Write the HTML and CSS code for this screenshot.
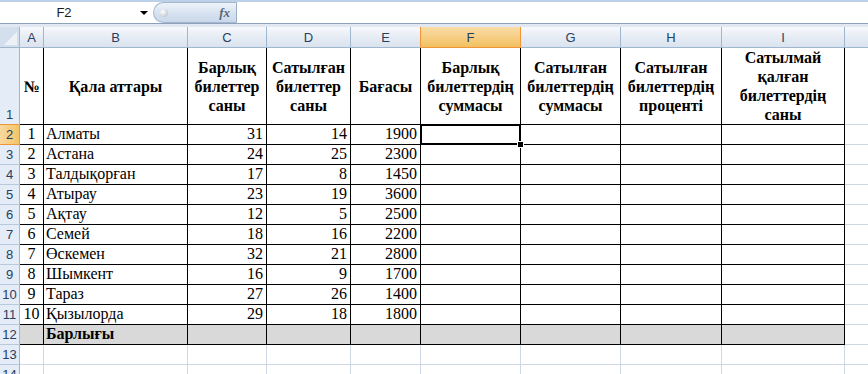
FILE: index.html
```html
<!DOCTYPE html>
<html lang="kk">
<head>
<meta charset="utf-8">
<title>Excel</title>
<link rel="stylesheet" href="styles.css">
</head>
<body>
<div class="fbar">
  <div class="namebox"><span class="name">F2</span><span class="arrow"></span></div>
  <div class="pill"><span class="knob"></span><span class="fx">fx</span></div>
  <div class="formula"></div>
</div>
<div class="gap"></div>
<div class="sheet">
  <div class="corner"><span class="tri"></span></div>
  <div class="ch">A</div><div class="ch">B</div><div class="ch">C</div><div class="ch">D</div><div class="ch prev">E</div><div class="ch sel">F</div><div class="ch">G</div><div class="ch">H</div><div class="ch">I</div><div class="ch"></div>

  <div class="rh prev">1</div>
  <div class="c hd">№</div>
  <div class="c hd">Қала аттары</div>
  <div class="c hd">Барлық<br>билеттер<br>саны</div>
  <div class="c hd">Сатылған<br>билеттер<br>саны</div>
  <div class="c hd">Бағасы</div>
  <div class="c hd">Барлық<br>билеттердің<br>суммасы</div>
  <div class="c hd">Сатылған<br>билеттердің<br>суммасы</div>
  <div class="c hd">Сатылған<br>билеттердің<br>проценті</div>
  <div class="c hd">Сатылмай<br>қалған<br>билеттердің<br>саны</div>
  <div class="g"></div>

  <div class="rh sel">2</div><div class="c ctr">1</div><div class="c">Алматы</div><div class="c num">31</div><div class="c num">14</div><div class="c num">1900</div><div class="c active"><span class="selbox"></span><span class="handle"></span></div><div class="c"></div><div class="c"></div><div class="c"></div><div class="g"></div>
  <div class="rh">3</div><div class="c ctr">2</div><div class="c">Астана</div><div class="c num">24</div><div class="c num">25</div><div class="c num">2300</div><div class="c"></div><div class="c"></div><div class="c"></div><div class="c"></div><div class="g"></div>
  <div class="rh">4</div><div class="c ctr">3</div><div class="c">Талдықорған</div><div class="c num">17</div><div class="c num">8</div><div class="c num">1450</div><div class="c"></div><div class="c"></div><div class="c"></div><div class="c"></div><div class="g"></div>
  <div class="rh">5</div><div class="c ctr">4</div><div class="c">Атырау</div><div class="c num">23</div><div class="c num">19</div><div class="c num">3600</div><div class="c"></div><div class="c"></div><div class="c"></div><div class="c"></div><div class="g"></div>
  <div class="rh">6</div><div class="c ctr">5</div><div class="c">Ақтау</div><div class="c num">12</div><div class="c num">5</div><div class="c num">2500</div><div class="c"></div><div class="c"></div><div class="c"></div><div class="c"></div><div class="g"></div>
  <div class="rh">7</div><div class="c ctr">6</div><div class="c">Семей</div><div class="c num">18</div><div class="c num">16</div><div class="c num">2200</div><div class="c"></div><div class="c"></div><div class="c"></div><div class="c"></div><div class="g"></div>
  <div class="rh">8</div><div class="c ctr">7</div><div class="c">Өскемен</div><div class="c num">32</div><div class="c num">21</div><div class="c num">2800</div><div class="c"></div><div class="c"></div><div class="c"></div><div class="c"></div><div class="g"></div>
  <div class="rh">9</div><div class="c ctr">8</div><div class="c">Шымкент</div><div class="c num">16</div><div class="c num">9</div><div class="c num">1700</div><div class="c"></div><div class="c"></div><div class="c"></div><div class="c"></div><div class="g"></div>
  <div class="rh">10</div><div class="c ctr">9</div><div class="c">Тараз</div><div class="c num">27</div><div class="c num">26</div><div class="c num">1400</div><div class="c"></div><div class="c"></div><div class="c"></div><div class="c"></div><div class="g"></div>
  <div class="rh">11</div><div class="c ctr">10</div><div class="c">Қызылорда</div><div class="c num">29</div><div class="c num">18</div><div class="c num">1800</div><div class="c"></div><div class="c"></div><div class="c"></div><div class="c"></div><div class="g"></div>
  <div class="rh">12</div><div class="c tot"></div><div class="c tot b">Барлығы</div><div class="c tot"></div><div class="c tot"></div><div class="c tot"></div><div class="c tot"></div><div class="c tot"></div><div class="c tot"></div><div class="c tot"></div><div class="g"></div>
  <div class="rh">13</div><div class="g"></div><div class="g"></div><div class="g"></div><div class="g"></div><div class="g"></div><div class="g"></div><div class="g"></div><div class="g"></div><div class="g"></div><div class="g"></div>
  <div class="rh">14</div><div class="g"></div><div class="g"></div><div class="g"></div><div class="g"></div><div class="g"></div><div class="g"></div><div class="g"></div><div class="g"></div><div class="g"></div><div class="g"></div>
</div>
</body>
</html>
```
FILE: styles.css
```css
html, body {
  margin: 0;
  padding: 0;
  background: #ffffff;
}
body {
  width: 868px;
  height: 374px;
  overflow: hidden;
}

/* formula bar */
.fbar {
  display: flex;
  height: 24px;
  box-sizing: border-box;
  border-top: 2px solid #bcd0e8;
  border-bottom: 1px solid #8da1bb;
  background: #ffffff;
}
.namebox {
  width: 153px;
  display: flex;
  align-items: center;
  font-family: "Liberation Sans", Arial, sans-serif;
  font-size: 13px;
  color: #1b1b1b;
}
.name {
  width: 128px;
  text-align: center;
}
.arrow {
  margin-left: 12px;
  width: 0;
  height: 0;
  border-left: 4px solid transparent;
  border-right: 4px solid transparent;
  border-top: 4px solid #000000;
}
.pill {
  width: 84px;
  box-sizing: border-box;
  display: flex;
  align-items: center;
  justify-content: space-between;
  padding: 0 6px 0 6px;
  border: 1px solid #a4b6cc;
  border-right: 1px solid #9aaec6;
  border-radius: 11px 0 0 11px;
  background: linear-gradient(#eef3f9, #d6e2f0 55%, #c9d8ea);
}
.knob {
  width: 8px;
  height: 8px;
  border-radius: 50%;
  background: radial-gradient(circle at 35% 35%, #ffffff, #c7ced8 70%, #aab4c2);
}
.fx {
  font-family: "Liberation Serif", "Times New Roman", serif;
  font-style: italic;
  font-weight: bold;
  font-size: 13px;
  color: #5b6778;
}
.formula {
  flex: 1;
  background: #ffffff;
}
.gap {
  height: 3px;
  background: #e2e8f1;
}

/* sheet grid */
.sheet {
  display: grid;
  grid-template-columns: 20px 24px 144px 79px 84px 70px 100px 100px 101px 123px 40px;
  grid-template-rows: 21px 77px repeat(13, 20px);
  font-family: "Liberation Serif", "Times New Roman", serif;
  font-size: 16px;
  color: #000000;
}
.sheet > div {
  box-sizing: border-box;
  border-right: 1px solid #d0d7e5;
  border-bottom: 1px solid #d0d7e5;
  overflow: hidden;
  white-space: nowrap;
}
.sheet > .corner {
  position: relative;
  background: #d4dfee;
  border-right: 1px solid #9eb6ce;
  border-bottom: 1px solid #9eb6ce;
}
.tri {
  position: absolute;
  right: 2px;
  bottom: 2px;
  width: 0;
  height: 0;
  border-left: 13px solid transparent;
  border-bottom: 13px solid #eef2f7;
}
.sheet > .ch {
  display: flex;
  align-items: center;
  justify-content: center;
  font-family: "Liberation Sans", Arial, sans-serif;
  font-size: 13px;
  color: #27405f;
  background: linear-gradient(#f7f9fc, #e6ecf4 50%, #dae3ee);
  border-right: 1px solid #9eb6ce;
  border-bottom: 1px solid #9eb6ce;
}
.sheet > .ch.prev {
  border-right-color: #f29536;
}
.sheet > .ch.sel {
  background: linear-gradient(#f9dca6, #f6cf86 50%, #f1c05e);
  border-right-color: #f29536;
  border-bottom-color: #f29536;
}
.sheet > .rh {
  display: flex;
  align-items: flex-end;
  justify-content: center;
  padding-bottom: 1px;
  font-family: "Liberation Sans", Arial, sans-serif;
  font-size: 13px;
  line-height: 16px;
  color: #27405f;
  background: #e4ecf7;
  border-right: 1px solid #9eb6ce;
  border-bottom: 1px solid #b8c9dd;
}
.sheet > .rh.prev {
  border-bottom-color: #f29536;
}
.sheet > .rh.sel {
  background: linear-gradient(90deg, #f9d99f, #f3c46a);
  border-right-color: #f29536;
  border-bottom-color: #f29536;
}
.sheet > .c {
  display: flex;
  align-items: flex-end;
  padding: 0 2px 1px 2px;
  line-height: 18px;
  border-right: 1px solid #000000;
  border-bottom: 1px solid #000000;
}
.sheet > .num {
  justify-content: flex-end;
  padding-right: 3px;
}
.sheet > .ctr {
  justify-content: center;
}
.sheet > .hd {
  align-items: center;
  justify-content: center;
  text-align: center;
  font-weight: bold;
  line-height: 19px;
  padding: 0;
  white-space: normal;
}
.sheet > .tot {
  background: #d9d9d9;
}
.sheet > .b {
  font-weight: bold;
}
.sheet > .active {
  position: relative;
  overflow: visible;
}
.selbox {
  position: absolute;
  left: -1px;
  top: -1px;
  right: -1px;
  bottom: -1px;
  border: 2px solid #000000;
}
.handle {
  position: absolute;
  right: -4px;
  bottom: -4px;
  width: 5px;
  height: 5px;
  background: #000000;
  border: 1px solid #ffffff;
  z-index: 2;
}
```
